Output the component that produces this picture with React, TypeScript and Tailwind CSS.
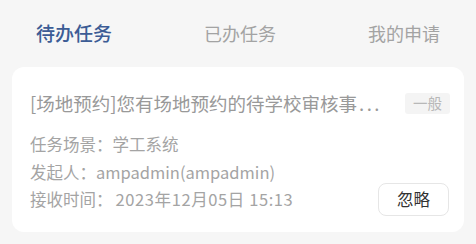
const FONT = { fontFamily: '"Noto Sans CJK SC", "Noto Sans", sans-serif' };

const TABS = ["待办任务", "已办任务", "我的申请"];

const ROWS = [
  { label: "任务场景：", value: "学工系统" },
  { label: "发起人：", value: "ampadmin(ampadmin)" },
];

export default function App() {
  return (
    <div className="h-[244px] w-[476px] overflow-hidden bg-[#f6f6f6]" style={FONT}>
      <div className="flex h-[67px] items-center justify-between px-[36px] pb-[2px]">
        {TABS.map((tab, i) => (
          <div
            key={tab}
            className={
              i === 0
                ? "text-[19px] font-medium leading-none text-[#3c5c95]"
                : "text-[18px] leading-none text-[#a3a3a3]"
            }
          >
            {tab}
          </div>
        ))}
      </div>

      <div className="mx-[12px] rounded-[12px] bg-white px-[18px] pb-[18px] pt-[23px]">
        <div className="flex h-[26px] items-center justify-between">
          <div className="truncate text-[18.5px] leading-[26px] text-[#999999]">
            [场地预约]您有场地预约的待学校审核事<span className="ml-[2px] tracking-[2.5px]">...</span>
          </div>
          <span className="-mr-[4px] ml-[8px] flex h-[21px] w-[45px] shrink-0 items-center justify-center rounded-[3px] bg-[#f4f4f4] text-[14.5px] text-[#b8b8b8]">
            一般
          </span>
        </div>

        <div className="mt-[15px] text-[16.5px] leading-[27.5px] text-[#a4a4a4]">
          {ROWS.map((r) => (
            <div key={r.label}>
              {r.label}
              {r.value}
            </div>
          ))}
          <div className="flex items-center justify-between">
            <div>
              接收时间：<span className="ml-[3px] tracking-[0.6px]">2023年12月05日 15:13</span>
            </div>
            <button className="-my-[3px] -mr-[3px] flex h-[33px] w-[71px] items-center justify-center rounded-[8px] border border-[#e6e6e6] bg-white text-[16.5px] text-[#333333]">
              忽略
            </button>
          </div>
        </div>
      </div>
    </div>
  );
}
